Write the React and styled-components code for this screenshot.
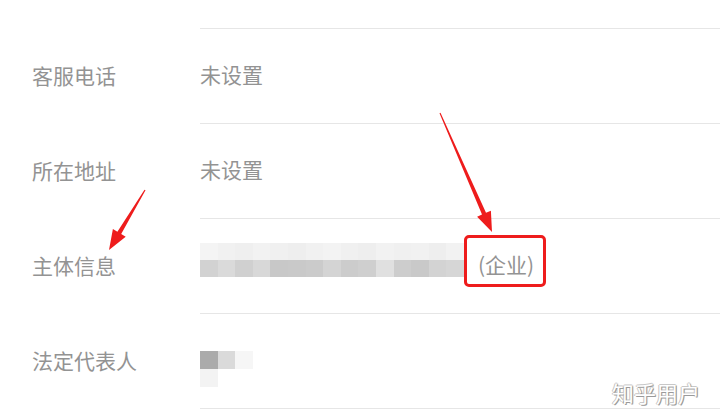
import React from 'react'
import styled, { createGlobalStyle } from 'styled-components'

const GlobalStyle = createGlobalStyle`
  html, body {
    margin: 0;
    padding: 0;
    background: #ffffff;
  }
  body {
    font-family: "Noto Sans CJK SC", "Noto Sans", sans-serif;
  }
`

const Page = styled.div`
  position: relative;
  width: 720px;
  height: 418px;
  overflow: hidden;
  background: #ffffff;
`

const List = styled.div`
  display: flex;
  flex-direction: column;
`

const Row = styled.div`
  display: grid;
  grid-template-columns: 200px 1fr;
  height: ${({ $height }) => $height || 95}px;
`

const Label = styled.div`
  display: flex;
  align-items: center;
  padding-left: 32px;
  padding-bottom: 4px;
  font-size: 21px;
  color: #939393;
`

const Value = styled.div`
  display: flex;
  align-items: center;
  padding-bottom: 4px;
  border-bottom: 1px solid #e6e6e6;
  font-size: 21px;
  color: #939393;
`

const Mosaic = styled.div`
  display: grid;
  grid-template-columns: repeat(${({ $cols }) => $cols}, ${({ $cell }) => $cell}px);
  grid-auto-rows: ${({ $rowH }) => $rowH}px;
  align-self: flex-start;
  margin-top: ${({ $top }) => $top}px;
`

const Cell = styled.div`
  background: ${({ $c }) => $c};
`

const Highlight = styled.span`
  display: inline-flex;
  align-items: center;
  justify-content: center;
  box-sizing: border-box;
  height: 52px;
  padding: 6px 9px 0 11px;
  border: 3px solid #ee1c1c;
  border-radius: 5px;
  margin-top: -6px;
`

const Note = styled.span`
  color: #939393;
`

const Overlay = styled.svg`
  position: absolute;
  left: 0;
  top: 0;
  pointer-events: none;
`

const Watermark = styled.div`
  position: absolute;
  right: 20px;
  bottom: 10px;
  font-size: 22px;
  color: #ffffff;
  text-shadow: 1px 1px 0 #9a9a9a, -1px 0 0 #c4c4c4, 0 -1px 0 #c8c8c8, 1px 0 1px #a6a6a6;
`

const topBand = ['#f4f4f4', '#f1f1f1', '#efefef', '#f2f2f2', '#f0f0f0', '#eeeeee', '#f1f1f1', '#f3f3f3', '#f0f0f0', '#eeeeee', '#f2f2f2', '#f0f0f0', '#f1f1f1', '#eeeeee', '#f2f2f2']
const lowBand = ['#d2d2d2', '#dadada', '#d0d0d0', '#d8d8d8', '#c8c8c8', '#c9c9c9', '#cbcbcb', '#d4d4d4', '#cccccc', '#cfcfcf', '#e0e0e0', '#cdcdcd', '#c9c9c9', '#d3d3d3', '#d6d6d6']

const nameCells = ['#ababab', '#dadada', '#f6f6f6', '#f3f3f3', '#ffffff', '#ffffff']

const arrow = (x1, y1, x2, y2) => {
  const dx = x2 - x1
  const dy = y2 - y1
  const len = Math.hypot(dx, dy)
  const ux = dx / len
  const uy = dy / len
  const px = -uy
  const py = ux
  const head = 20
  const bx = x2 - ux * head
  const by = y2 - uy * head
  const p = (x, y) => `${x.toFixed(1)},${y.toFixed(1)}`
  return [
    p(x1 + px * 0.6, y1 + py * 0.6),
    p(bx + px * 2.2, by + py * 2.2),
    p(bx + px * 7.5, by + py * 7.5),
    p(x2, y2),
    p(bx - px * 7.5, by - py * 7.5),
    p(bx - px * 2.2, by - py * 2.2),
    p(x1 - px * 0.6, y1 - py * 0.6),
  ].join(' ')
}

const App = () => {
  return (
    <Page>
      <GlobalStyle />
      <List>
        <Row $height={29}>
          <Label />
          <Value />
        </Row>
        <Row>
          <Label>客服电话</Label>
          <Value>未设置</Value>
        </Row>
        <Row>
          <Label>所在地址</Label>
          <Value>未设置</Value>
        </Row>
        <Row>
          <Label>主体信息</Label>
          <Value>
            <Mosaic $cols={15} $cell={17.6} $rowH={17} $top={24}>
              {topBand.map((c, i) => <Cell key={'t' + i} $c={c} />)}
              {lowBand.map((c, i) => <Cell key={'l' + i} $c={c} />)}
            </Mosaic>
            <Highlight>
              <Note>(企业)</Note>
            </Highlight>
          </Value>
        </Row>
        <Row>
          <Label>法定代表人</Label>
          <Value>
            <Mosaic $cols={3} $cell={17.5} $rowH={18} $top={37}>
              {nameCells.map((c, i) => <Cell key={i} $c={c} />)}
            </Mosaic>
          </Value>
        </Row>
      </List>
      <Overlay width="720" height="418" viewBox="0 0 720 418">
        <polygon points={arrow(145, 190, 109, 250)} fill="#ee1c1c" />
        <polygon points={arrow(440, 113, 492, 232)} fill="#ee1c1c" />
      </Overlay>
      <Watermark>知乎用户</Watermark>
    </Page>
  )
}

export default App
